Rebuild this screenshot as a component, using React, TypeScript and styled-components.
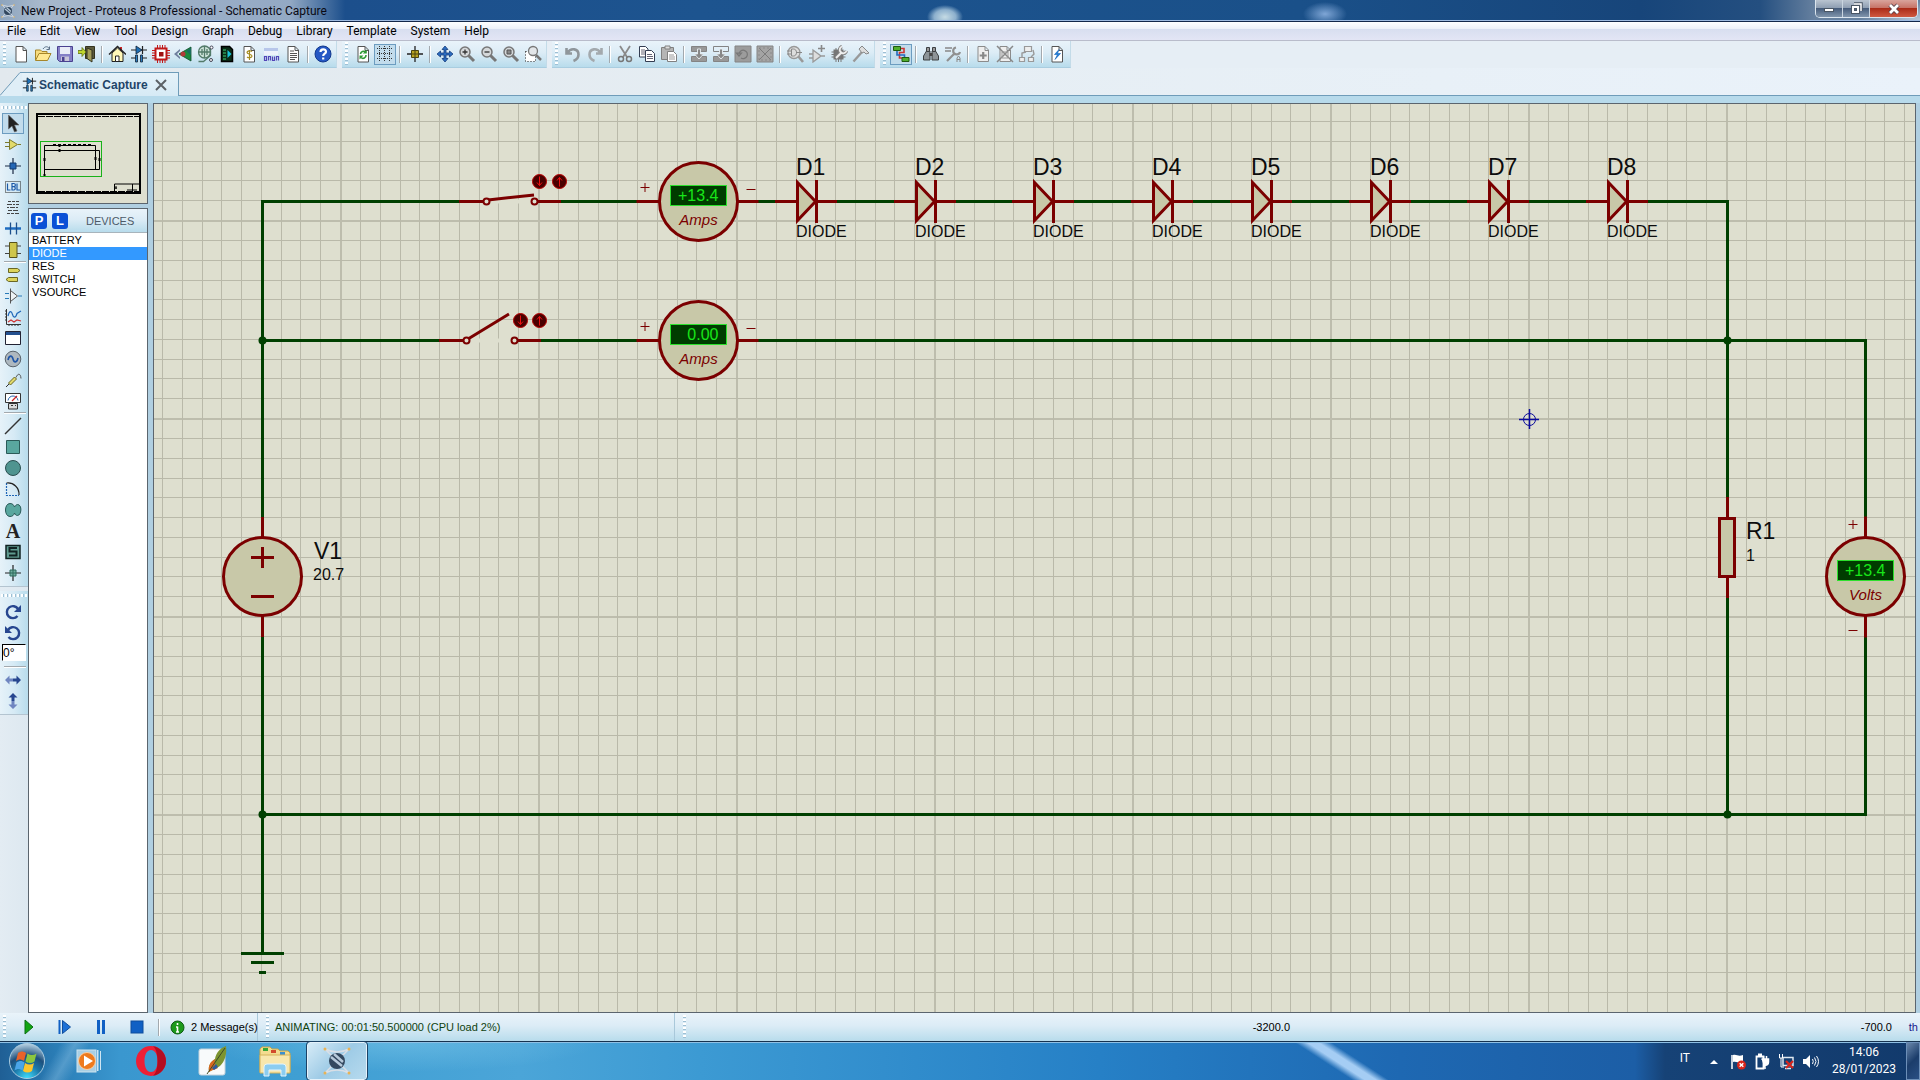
import React from "react";
import styled, { createGlobalStyle, css } from "styled-components";

const Global = createGlobalStyle`
  * { box-sizing: border-box; }
  body { margin: 0; background: #e6eef5; }
  button { font: inherit; color: inherit; border: 0; background: none; padding: 0; margin: 0; cursor: default; }
  ul { list-style: none; margin: 0; padding: 0; }
`;

const uiFont = `Roboto, "Open Sans", sans-serif`;
const sansFont = `"Liberation Sans", Arial, sans-serif`;
const barGradient = "linear-gradient(#e9f3fa, #dcecf6 45%, #b8dcec)";

/* ---------- window frame ---------- */

const Window = styled.div`
  display: flex;
  flex-direction: column;
  height: 100vh;
  min-height: 640px;
  overflow: hidden;
  font: 11px/14px ${sansFont};
  color: #000;
  background: #e6eef5;
`;

const TitleBar = styled.header`
  display: flex;
  align-items: flex-start;
  justify-content: space-between;
  height: 22px;
  flex: none;
  border-bottom: 1px solid #14284a;
  box-shadow: inset 0 -1px #9fbbe0;
  background:
    radial-gradient(ellipse 18px 12px at 945px 17px, #c5dbe4, #8db0cd 60%, transparent),
    radial-gradient(ellipse 22px 12px at 1325px 14px, #7fa6d6, transparent),
    radial-gradient(ellipse 60px 20px at 100% 100%, #b9cbdc, transparent),
    linear-gradient(90deg, #8ea5be, #a7b8cc 40px, #93a9c4 290px, #1c4f8c 345px, #1d548f 700px, #1a5089 1300px, #17457a 1640px, #244f80 1760px, #66809f 1815px, #64819f);
`;

const TitleText = styled.h1`
  display: flex;
  align-items: center;
  gap: 5px;
  height: 22px;
  margin: 0;
  padding-left: 0;
  font: 12px/20px ${uiFont};
  color: #0a0a14;
`;

const WindowButtons = styled.div`
  display: flex;
  height: 18px;
  margin-right: 2px;
  border: 1px solid #dbe5ee;
  border-top: 0;
  border-radius: 0 0 5px 5px;
  overflow: hidden;
`;

const WindowButton = styled.button<{ $wide?: boolean }>`
  display: flex;
  align-items: center;
  justify-content: center;
  width: ${(p) => (p.$wide ? 47 : 27)}px;
  border-right: 1px solid #c9d5e0;
  background: ${(p) =>
    p.$wide
      ? "linear-gradient(#d9a49c, #c77468 45%, #ab2c18 50%, #cf5940)"
      : "linear-gradient(#b9c4d0, #8f9fb3 45%, #475d7c 50%, #8095ac)"};
  &:last-child { border-right: 0; }
`;

const MenuBar = styled.nav`
  display: flex;
  height: 19px;
  flex: none;
  border-bottom: 1px solid #b9bccb;
  background: linear-gradient(#fff, #eff2f9 36%, #d8dff0 40%, #e3e5f5);
`;

const MenuButton = styled.button`
  padding: 0 7px;
  font: 12px/19px ${uiFont};
`;

/* ---------- toolbars ---------- */

const ToolbarRow = styled.div`
  display: flex;
  gap: 5px;
  height: 27px;
  flex: none;
`;

const Toolbar = styled.div`
  display: flex;
  align-items: center;
  padding-right: 2px;
  border-bottom: 1px solid #a9cde0;
  border-right: 1px solid #c3dbe8;
  background: ${barGradient};
`;

const Grip = styled.span<{ $flat?: boolean }>`
  flex: none;
  ${(p) =>
    p.$flat
      ? css`
          width: 26px;
          height: 3px;
          margin: 3px 1px 4px;
          background: repeating-linear-gradient(90deg, #fff 0 2px, #9dbfd4 2px 3px, transparent 3px 4px);
        `
      : css`
          width: 3px;
          height: 24px;
          margin: 0 4px 0 3px;
          background: repeating-linear-gradient(#fff 0 2px, #9dbfd4 2px 3px, transparent 3px 4px);
        `}
`;

const Divider = styled.span<{ $flat?: boolean }>`
  flex: none;
  ${(p) =>
    p.$flat
      ? css`width: 22px; height: 2px; margin: 1px 2px 1px 4px; border-top: 1px solid #a3a9ae; border-bottom: 1px solid #fff;`
      : css`width: 2px; height: 17px; margin: 0 3px; border-left: 1px solid #a3a9ae; border-right: 1px solid #fff;`}
`;

const ToolButton = styled.button<{ $on?: boolean }>`
  display: flex;
  align-items: center;
  justify-content: center;
  flex: none;
  width: 22px;
  height: 21px;
  ${(p) => p.$on && css`background: #c2dcec; box-shadow: inset 0 0 0 1px #6c9cc0;`}
`;

/* ---------- tab strip ---------- */

const TabStrip = styled.div`
  display: flex;
  align-items: flex-end;
  height: 35px;
  flex: none;
  padding-top: 4px;
  border-bottom: 7px solid #b7daeb;
  background: linear-gradient(90deg, #e2e9ee, #e6eef4 50%, #eaf2fa);
`;

const TabSlope = styled.svg`
  flex: none;
  width: 22px;
  height: 24px;
`;

const Tab = styled.button`
  display: flex;
  align-items: center;
  height: 24px;
  padding: 0 10px 0 0;
  border: 1px solid #6f9cb9;
  border-width: 1px 1px 0 0;
  background: linear-gradient(#e6f2f9, #d6eaf5);
  font: bold 12px/22px ${sansFont};
  color: #1f4468;
  & > svg:first-child { margin-right: 2px; }
  & > svg:last-child { margin-left: 6px; }
`;

const TabRule = styled.span`
  flex: 1;
  height: 1px;
  background: #6f9cb9;
`;

/* ---------- workspace ---------- */

const Workspace = styled.main`
  display: flex;
  flex: 1;
  min-height: 0;
  padding-right: 4px;
  background: #b0cfe1;
`;

const ToolRail = styled.div`
  display: flex;
  flex-direction: column;
  gap: 4px;
  width: 28px;
  flex: none;
  background: linear-gradient(90deg, #e3ecf3, #dde8f0);
`;

const RailGroup = styled.div`
  display: flex;
  flex-direction: column;
  padding-bottom: 3px;
  border-bottom: 1px solid #b4c4d0;
  background: linear-gradient(90deg, #e6f2f9, #d6eaf5 50%, #b8dcec);
  & > ${ToolButton} { margin-left: 2px; }
`;

const AngleInput = styled.input`
  width: 24px;
  height: 17px;
  margin: 1px 0 4px 2px;
  padding: 0;
  border: 1px solid #fff;
  border-top-color: #000;
  border-left-color: #000;
  border-radius: 0;
  background: #fff;
  font: 12px/14px ${sansFont};
`;

const SidePanels = styled.aside`
  display: flex;
  flex-direction: column;
  gap: 4px;
  width: 120px;
  flex: none;
  margin-right: 5px;
`;

const Overview = styled.section`
  height: 101px;
  flex: none;
  border: 1px solid #5b656e;
  background: #dedfcf;
`;

const DevicePanel = styled.section`
  display: flex;
  flex-direction: column;
  flex: 1;
  border: 1px solid #5b656e;
  background: #fff;
`;

const DeviceHeader = styled.div`
  display: flex;
  align-items: center;
  gap: 5px;
  height: 24px;
  margin-bottom: 1px;
  padding-left: 2px;
  border-bottom: 1px solid #a8b4bc;
  background: ${barGradient};
`;

const LetterButton = styled.button`
  width: 16px;
  height: 16px;
  border-radius: 3px;
  background: #0b50d6;
  color: #fff;
  font: bold 13px/16px ${sansFont};
`;

const DeviceTitle = styled.h2`
  flex: 1;
  margin: 0;
  padding-left: 13px;
  font: 11px/16px ${sansFont};
  color: #4d5a68;
`;

const DeviceItem = styled.button<{ $on?: boolean }>`
  display: block;
  width: 100%;
  height: 13px;
  padding: 0 3px;
  text-align: left;
  font: 11px/13px ${sansFont};
  background: ${(p) => (p.$on ? "#3399ff" : "#fff")};
  color: ${(p) => (p.$on ? "#fff" : "#000")};
`;

const Sheet = styled.section`
  flex: 1;
  min-width: 0;
  border: 1px solid #5b656e;
  background: #dedfcf;
  overflow: hidden;
`;

const Drawing = styled.svg`
  display: block;
  width: 100%;
  height: 100%;
  font-family: ${sansFont};
`;

/* ---------- status bar ---------- */

const StatusBar = styled.footer`
  display: flex;
  align-items: stretch;
  gap: 5px;
  height: 28px;
  flex: none;
  background: ${barGradient};
`;

const StatusPane = styled.div<{ $grow?: number; $w?: number }>`
  display: flex;
  align-items: center;
  white-space: nowrap;
  ${(p) => (p.$grow ? `flex: ${p.$grow} 1 0;` : "flex: none;")}
  ${(p) => p.$w && `width: ${p.$w}px;`}
  border-right: 1px solid #a9c8da;
  &:last-child { border-right: 0; }
`;

const SimControls = styled.div`
  display: flex;
  margin-left: 1px;
`;

const SimButton = styled.button`
  display: flex;
  align-items: center;
  justify-content: center;
  width: 36px;
  height: 22px;
`;

const MessageButton = styled.button`
  display: flex;
  align-items: center;
  gap: 6px;
  padding: 0 0 0 7px;
`;

const SimText = styled.output`
  padding-left: 2px;
  color: #10420f;
`;

const Coords = styled.div`
  display: flex;
  flex: 1;
  justify-content: flex-end;
  padding-right: 2px;
`;

const Coord = styled.output<{ $w: number; $unit?: boolean }>`
  width: ${(p) => p.$w}px;
  text-align: right;
  color: ${(p) => (p.$unit ? "#16168c" : "#000")};
`;

/* ---------- taskbar ---------- */

const Taskbar = styled.footer`
  display: flex;
  align-items: stretch;
  height: 39px;
  flex: none;
  border-top: 1px solid #16324f;
  box-shadow: inset 0 1px #8fc0e4;
  color: #fff;
  font: 12px/17px ${uiFont};
  background:
    linear-gradient(33deg, transparent calc(50% - 10px), #a5cdf4 calc(50% - 3px), #a5cdf4 calc(50% + 3px), transparent calc(50% + 10px)) 1270px 0 / 146px 40px no-repeat,
    linear-gradient(120deg, transparent 40%, rgba(160, 205, 235, 0.35) 50%, transparent 60%) 0 0 / 130px 40px no-repeat,
    radial-gradient(ellipse 200px 30px at 400px 0, rgba(140, 210, 240, 0.4), transparent),
    linear-gradient(90deg, #1f5f95, #2b7fb8 60px, #3a97cf 120px, #3f9fd3 300px, #4ba5d8 520px, #3c9ad3 700px, #2680c6 1100px, #1e68b2 1400px, #1c5ea6 1635px, #164276 1665px, #123a6c);
`;

const TaskButton = styled.button<{ $on?: boolean }>`
  display: flex;
  align-items: center;
  justify-content: center;
  width: 60px;
  height: 38px;
  margin-right: 2px;
  ${(p) =>
    p.$on &&
    css`
      border: 1px solid #e4f2fb;
      border-radius: 3px;
      outline: 1px solid #1b4266;
      outline-offset: 0;
      background: linear-gradient(135deg, #d6ebf7, #9ecbe6 50%, #b6daee);
    `}
`;

const StartButton = styled(TaskButton)`
  width: 54px;
  margin-right: 5px;
`;

const Tray = styled.div`
  display: flex;
  align-items: center;
  margin-left: auto;
`;

const TrayButton = styled.button`
  display: flex;
  align-items: center;
  justify-content: center;
  width: 24px;
  height: 30px;
`;

const Language = styled.button`
  margin-right: 12px;
  padding-bottom: 6px;
`;

const Clock = styled.button`
  width: 84px;
  text-align: center;
`;

const ShowDesktop = styled.button`
  width: 14px;
  height: 38px;
  border: 1px solid #6c8fb8;
  background: linear-gradient(135deg, #6a87ab, #1b3d6b 50%, #2a5084);
`;

/* ---------- icons ---------- */

const Ico = ({ children, s = 18 }: { children: React.ReactNode; s?: number }) => (
  <svg width={s} height={s} viewBox="0 0 18 18" fill="none" aria-hidden="true">
    {children}
  </svg>
);

const page = <path d="M4 1.5h7l3.500 3.500v12h-10.500z M11 1.500v4h3.500" fill="#fff" stroke="#555" />;
const grayPage = <path d="M4 1.500h7l3.500 3.500v11.500h-10.500z M11 1.500v4h3.500" fill="#eee" stroke="#8b8b8b" />;
const lens = (inside: React.ReactNode) => (
  <>
    <path d="M10.500 10.500l5.500 5.500" stroke="#777" strokeWidth="3" />
    <circle cx="7" cy="7" r="5" fill="#d5d8da" stroke="#777" strokeWidth="1.500" />
    {inside}
  </>
);
const schem = (
  <>
    <path d="M1 5h16 M12.500 1v8 M1 13h6 M11 13h6" stroke="#222" strokeWidth="1.200" />
    <path d="M6 1l6 4-6 4z" fill="#1d6fb4" stroke="#123" strokeWidth=".8" />
    <path d="M5.500 10h2v7h-2z M10.500 10h2v7h-2z" fill="#2a7fc2" stroke="#123" strokeWidth=".8" />
  </>
);

const icons: Record<string, React.ReactNode> = {
  "New Project": page,
  "Open Project": (
    <>
      <path d="M1.500 15V5h5l1.500 1.500h5V9" fill="#f6dc7e" stroke="#a6862a" />
      <path d="M1.500 15.500L5 8.500h12l-3.500 7z" fill="#ffe991" stroke="#a6862a" />
      <path d="M9 4c2-3 5-3 6.500 0m0-2.500V4.500H12.500" stroke="#5a6f86" />
    </>
  ),
  "Save Project": (
    <>
      <path d="M1.500 1.500h15v15h-13l-2-2z" fill="#8580c6" stroke="#4a4190" />
      <path d="M4 2h10v7H4z" fill="#e9ecf6" />
      <path d="M5 11.500h8V16H5z" fill="#c9c6d8" /><path d="M6 12h2.500v4H6z" fill="#4a4190" />
    </>
  ),
  "Close Project": (
    <>
      <path d="M7.500 1.500h9v12h-9z" fill="#5b5a3c" stroke="#33331f" />
      <path d="M9 3l5 2v12l-5-3.500z" fill="#a39e5a" stroke="#33331f" />
      <path d="M0 5.500h4v-3l4 4.500-4 4.500v-3H0z" fill="#bfd62f" stroke="#5c7011" strokeWidth=".8" />
    </>
  ),
  "Home Page": (
    <>
      <path d="M12 2h2v4h-2z" fill="#c22" />
      <path d="M4 8v8.500h11V8L9.500 3z" fill="#fff7b8" stroke="#222" />
      <path d="M1 9.500L9.500 1.500 18 9.500" stroke="#222" strokeWidth="1.400" />
      <path d="M7.500 11h3.500v5.500H7.500z" fill="#fff" stroke="#222" />
    </>
  ),
  "Schematic Capture": schem,
  "PCB Layout": (
    <>
      <path d="M5.500 0v18 M8 0v18 M10.500 0v18 M13 0v18 M0 5.500h18 M0 8h18 M0 10.500h18 M0 13h18" stroke="#c01818" />
      <path d="M3.500 3.500h11v11h-11z" fill="#fff" stroke="#c01818" strokeWidth="2" />
      <path d="M7 7h4.500v4.500H7z" fill="#a01010" />
    </>
  ),
  "3D Visualizer": (
    <>
      <path d="M0 9l6-5v2L3 9l3 3v2z" fill="#6f7f9d" />
      <path d="M5 9l12-7v14z" fill="#1b8b3e" stroke="#0d4c2b" strokeWidth=".8" />
      <circle cx="9" cy="9" r="2.500" fill="#b23a3a" /><path d="M12 6l5-3v7z" fill="#1a6d60" />
    </>
  ),
  "Gerber Viewer": (
    <>
      <circle cx="8.500" cy="7" r="6" fill="#cfe4da" stroke="#537b6a" strokeWidth="1.300" />
      <path d="M2 7h13M8.500 1v12M2.500 16.500h5l7-6V3M6 4v6M11 4v6" stroke="#537b6a" strokeWidth="1.300" />
      <circle cx="15.500" cy="2.500" r="1.500" fill="#fff" stroke="#445" /><circle cx="15" cy="15" r="1.500" fill="#fff" stroke="#445" />
    </>
  ),
  "Design Explorer": (
    <>
      <path d="M3.500 1.500h8l3 3v12h-11z" fill="#0a2d17" stroke="#000" strokeWidth="1.500" />
      <path d="M5 5h3 M5 8h3 M5 11h3 M5 14h3" stroke="#3fd07a" />
      <path d="M9.500 5v8l4-4z" fill="#19c3d8" />
    </>
  ),
  "Bill of Materials": (
    <>
      {page}
      <path d="M12 6.500c-1.500-1.200-5-1-5 1s5 1.500 5 3.500-3.500 2.200-5 1M9.500 5v10" stroke="#a58b1e" strokeWidth="1.200" />
    </>
  ),
  "Source Code": (
    <>
      <path d="M2 3h14v3H2z" fill="#b7c6ea" /><path d="M2 6h14v4H2z" fill="#eef2fb" />
      <path d="M2.500 11.500h2v4h-2z M6.500 15.500v-4h2v4 M10.500 11.500v4h2v-4 M14.500 15.500v-4h2v4" stroke="#5346b8" strokeWidth="1.200" />
    </>
  ),
  "Project Notes": (
    <>
      {page}
      <path d="M6 6h4M6 8.500h7M6 10.500h7M6 12.500h7M6 14.500h5" stroke="#555" />
    </>
  ),
  Help: (
    <>
      <circle cx="9" cy="9" r="8" fill="#2557c4" stroke="#12388c" />
      <path d="M6.500 7c0-3.500 5.500-3.500 5.500-.3 0 2-2.800 2-2.800 4.300M9.200 12.500v2" stroke="#fff" strokeWidth="2.200" />
    </>
  ),
  "Redraw Display": (
    <>
      {page}
      <path d="M6.500 9a3 3 0 0 1 5-2M12 10a3 3 0 0 1-5 2.500" stroke="#2f9a35" strokeWidth="1.600" />
      <path d="M12.800 4.500v4h-4z M5.500 14.500v-4h4z" fill="#2f9a35" />
    </>
  ),
  "Toggle Grid": (
    <>
      <path d="M1 3.500h16M1 8.500h16M1 13.500h16" stroke="#333" strokeDasharray="1 1" />
      <path d="M3.500 1v16M8.500 1v16M13.500 1v16" stroke="#333" strokeDasharray="1 1" />
    </>
  ),
  "False Origin": (
    <>
      <path d="M9 1v16M1 9h16" stroke="#222" strokeWidth="1.300" />
      <path d="M5.500 5.500h7v7h-7z" fill="#b8a321" stroke="#4d4510" /><path d="M9 5v8M5 9h8" stroke="#4d4510" />
    </>
  ),
  "Center at Cursor": (
    <path d="M9 1l3 3.500h-2v3.500h3.500V6L17 9l-3.500 3v-2H10v3.500h2L9 17l-3-3.500h2V10H4.500v2L1 9l3.500-3v2H8V4.500H6z" fill="#2b6cc0" stroke="#173e7c" strokeWidth=".8" />
  ),
  "Zoom In": lens(<path d="M4.500 7h5M7 4.500v5" stroke="#333" strokeWidth="1.300" />),
  "Zoom Out": lens(<path d="M4.500 7h5" stroke="#333" strokeWidth="1.300" />),
  "Zoom All": lens(<path d="M5 5h4v4H5z" fill="#888" stroke="#555" />),
  "Zoom Area": (
    <>
      <path d="M1.500 6.500h10v10h-10z" stroke="#222" strokeDasharray="1 2" fill="#fff" />
      <path d="M12 10l5 5" stroke="#777" strokeWidth="2.500" /><circle cx="9" cy="6" r="4.500" fill="#e2e6e9" stroke="#777" strokeWidth="1.300" />
    </>
  ),
  Undo: <path d="M2.500 3v5.500H8M3.500 7.500c3.500-5 11-4 11 2 0 3.500-2.500 5.500-5 6.500" stroke="#8f969b" strokeWidth="2.600" />,
  Redo: <path d="M15.500 3v5.500H10M14.500 7.500c-3.500-5-11-4-11 2 0 3.500 2.500 5.500 5 6.500" stroke="#a3a9ad" strokeWidth="2.600" />,
  Cut: (
    <>
      <path d="M4 1l7 11M14 1L7 12" stroke="#8a8a8a" strokeWidth="1.800" />
      <circle cx="5" cy="14" r="2.500" stroke="#777" strokeWidth="1.500" /><circle cx="13" cy="14" r="2.500" stroke="#777" strokeWidth="1.500" />
    </>
  ),
  Copy: (
    <>
      <path d="M1.500 1.500h6l2.500 2.500v8h-8.500z" fill="#fff" stroke="#333d52" /><path d="M3 5h4M3 7h4M3 9h4" stroke="#667" />
      <path d="M7.500 5.500h6l3 3v8h-9z" fill="#fff" stroke="#333d52" /><path d="M9 9.500h5M9 11.500h6M9 13.500h6" stroke="#667" />
    </>
  ),
  Paste: (
    <>
      <path d="M1.500 2.500h12v12h-12z" fill="#b5b5b5" stroke="#808080" /><path d="M5 1h5v3H5z" fill="#ddd" stroke="#808080" />
      <path d="M7.500 6.500h6l3 3v7h-9z" fill="#fff" stroke="#808080" /><path d="M9 10h5M9 12h6M9 14h6" stroke="#999" />
    </>
  ),
  "Block Copy": (
    <>
      <path d="M1.500 1.500h15v5h-15z M1.500 11.500h15v5h-15z" fill="#989898" stroke="#848484" />
      <path d="M7.500 4h3v5h3L9 14 4.500 9h3z" fill="#888" stroke="#e8eef2" strokeWidth=".9" />
    </>
  ),
  "Block Move": (
    <>
      <path d="M1.500 1.500h15v5h-15z" stroke="#848484" /><path d="M1.500 11.500h15v5h-15z" fill="#989898" stroke="#848484" />
      <path d="M7.500 4h3v5h3L9 14 4.500 9h3z" fill="#888" stroke="#e8eef2" strokeWidth=".9" />
    </>
  ),
  "Block Rotate": (
    <>
      <path d="M1 1h16v16H1z" fill="#9c9c9c" stroke="#848484" />
      <path d="M5 9a4.200 4.200 0 1 1 2 4M2.500 8h5L5 11z" stroke="#777" strokeWidth="1.200" />
    </>
  ),
  "Block Delete": (
    <>
      <path d="M1 1h16v16H1z" fill="#a4a4a4" stroke="#848484" /><path d="M3 3l12 12M15 3L3 15" stroke="#7a7a7a" />
      <path d="M3 3h12v12H3z" stroke="#8a8a8a" strokeDasharray="2 2" />
    </>
  ),
  "Pick Parts": (
    <>
      <path d="M12 11l5 6" stroke="#999" strokeWidth="2.600" /><circle cx="8" cy="7.500" r="6" fill="#ddd" stroke="#999" strokeWidth="1.300" />
      <path d="M5.500 4v7h2c4 0 4-7 0-7zM1 6h4M1 9h4M10 7.500h6" stroke="#888" />
    </>
  ),
  "Make Device": (
    <>
      <path d="M5 5v12l8-6zM1 9h4M1 13h4M13 11h4" stroke="#999" strokeWidth="1.300" fill="#ddd" />
      <path d="M13.500 0v7M10 3.500h7" stroke="#888" strokeWidth="1.600" />
    </>
  ),
  "Packaging Tool": (
    <>
      <path d="M3.500 4.500h10v10h-10z" fill="#777" /><path d="M1.500 7h14M1.500 9.500h14M1.500 12h14M6 3v14M8.500 3v14M11 3v14" stroke="#777" />
      <path d="M6 13l6-6M12 1.500a3.500 3.500 0 1 0 4.500 4.500" stroke="#888" strokeWidth="3.600" />
      <path d="M6 13l6-6M12 1.500a3.500 3.500 0 1 0 4.500 4.500" stroke="#eee" strokeWidth="1.800" />
    </>
  ),
  Decompose: (
    <>
      <path d="M1.500 16.500L10 7" stroke="#999" strokeWidth="2.400" /><path d="M7 4l3-3 7 7-3 1-2-2-2 1z" fill="#ddd" stroke="#888" />
    </>
  ),
  "Wire Autorouter": (
    <>
      <path d="M8 3.500h4v4H7.500V13H11" stroke="#c33" strokeWidth="1.600" /><path d="M5 5v5h7.500V13" stroke="#246bbf" strokeWidth="1.600" />
      <path d="M1.500 1.500h7v4h-7z M10 12.500h7v4h-7z" fill="#4fae2c" stroke="#1f5a10" />
    </>
  ),
  "Search and Tag": (
    <>
      <path d="M4.500 6h3.500v9H1.500v-4z M13.500 6h-3.500v9h6.500v-4z" fill="#8d9498" stroke="#3c4043" /><path d="M4.500 2.500h3v4h-3z M10.500 2.500h3v4h-3z" fill="#999" stroke="#3c4043" />
      <path d="M7.500 8h3v3h-3z" fill="#444" />
    </>
  ),
  "Property Assignment": (
    <>
      <path d="M1 3h7M1 6h6" stroke="#888" strokeWidth="1.500" />
      <path d="M3 16l8-8M12 2.500a3.500 3.500 0 1 0 4 4.500" stroke="#909090" strokeWidth="2.200" />
      <path d="M13 17v-4l1.500-2 1.500 2v4M13 14.500h3" stroke="#888" />
    </>
  ),
  "New Sheet": (<>{grayPage}<path d="M9.200 7v7M5.700 10.500h7" stroke="#888" strokeWidth="2.200" /></>),
  "Remove Sheet": (
    <>
      {grayPage}
      <path d="M1 1l16 16M17 1L1 17" stroke="#888" strokeWidth="1.500" /><path d="M6 7h6v6H6z" stroke="#999" />
    </>
  ),
  "Exit to Parent": (
    <>
      <path d="M6.500 1.500h7v5h-7z M1.500 12.500h5v4h-5z M10.500 12.500h5v4h-5z" fill="#eee" stroke="#999" strokeWidth="1.200" />
      <path d="M4 12V8l4-1M13 12l3-3-1-4" stroke="#999" strokeWidth="1.400" />
    </>
  ),
  "Electrical Check": (<>{page}<path d="M11 4.500L6.500 9.500h3L7 14.500l5.500-6H9.500z" fill="#1e7fe0" stroke="#1462b4" strokeWidth=".6" /></>),

  Selection: <path d="M4.500 0v14l3.500-3 2.500 6 2.500-1-2.500-6h4.500z" fill="#222" stroke="#666" strokeWidth=".6" />,
  Component: <path d="M5.500 3.500v10l8-5zM1 6.500h4M1 10.500h4M14 8.500h3" fill="#e2da6b" stroke="#7d7a2c" />,
  "Junction Dot": (<><path d="M9 1v16M1 9h16" stroke="#1b2a44" strokeWidth="1.200" /><path d="M6 6h6v6H6z" fill="#2467b5" stroke="#143c70" /></>),
  "Wire Label": (
    <>
      <rect x="1.500" y="3.500" width="15" height="11" stroke="#222" strokeDasharray="1 1" />
      <path d="M3.500 5.500v6.500h3M8 5.500v6.500h2a1.700 1.700 0 0 0 0-3.300H8h1.800a1.600 1.600 0 0 0 0-3.200zM13 5.500v6.500h3" stroke="#1c5aa8" strokeWidth="1.200" />
    </>
  ),
  "Text Script": (
    <path d="M4 2.500h3M8 2.500h3M12 2.500h3M3 5.500h5M9 5.500h2M12 5.500h3M3 8.500h2M6 8.500h5M12 8.500h2M4 11.500h4M9 11.500h5M3 14.500h3M7 14.500h3M11 14.500h4" stroke="#444" />
  ),
  Bus: (<><path d="M1 8.500h16" stroke="#1f6cc0" strokeWidth="2.500" /><path d="M6.500 2.500v12M12.500 2.500v12" stroke="#1c4f8c" strokeWidth="1.300" /></>),
  Subcircuit: (<><path d="M1 5h16M1 12.500h16" stroke="#444" /><path d="M5.500 1.500h7.500v15H5.500z" fill="#cfc64c" stroke="#57521b" /></>),
  Terminals: <path d="M4.500 2.500h9l2.500 2-2.500 2h-9z M13.500 11.500h-9l-2.500 2 2.500 2h9z" fill="#dcd45b" stroke="#6a6725" />,
  "Device Pins": (<><path d="M6.500 3.500v11l7-5.500z" fill="#eef3f6" stroke="#555" /><path d="M6.500 1.500v15" stroke="#555" /><path d="M1 6.500h4M1 11.500h4M14 9h4" stroke="#287ab8" /></>),
  Graph: (
    <>
      <path d="M2.500 1v15.500H17M1 3h1.500M1 6h1.500M1 9h1.500M1 12h1.500M5 18v-1M8 18v-1M11 18v-1M14 18v-1" stroke="#333" />
      <path d="M4 8c1.500-6 3.500-5 4.500-1.500s3 4 4.500-1l4-2.500" stroke="#1f66b8" strokeWidth="1.200" /><path d="M4 14l3-2 3 2 3-2 4 1" stroke="#c33" strokeWidth="1.200" />
    </>
  ),
  "Active Popup": (<><path d="M1.500 2.500h15v13h-15z" fill="#fff" stroke="#223" /><path d="M2 3h14v3H2z" fill="#23508f" /></>),
  Generator: (<><circle cx="9" cy="9" r="7.800" fill="#aeb8bf" stroke="#5a646c" /><path d="M4 10c1-5 4-5 5-1s4 4 5-1" stroke="#1f56a8" strokeWidth="1.600" /></>),
  Probe: (<><path d="M2 16l3-3" stroke="#333" /><path d="M4.500 12l6-6 2 2-6 6z" fill="#e2da6b" stroke="#6a6725" /><path d="M12 6.500c1.500-4 4.500-5 5 1" stroke="#555" /></>),
  Instruments: (
    <>
      <path d="M1.500 1.500h15v9h-15z" fill="#fff" stroke="#333" /><path d="M4 8.500c1-6 9-6 10 0" stroke="#2264b0" /><path d="M8 9l5-5" stroke="#c22" strokeWidth="1.300" />
      <path d="M4.500 11.500h9v5.500h-9z" fill="#d8dadb" stroke="#333" /><path d="M7 13.500h2M11 13.500h1" stroke="#333" />
    </>
  ),
  Line: <path d="M1 17L17 1" stroke="#333" strokeWidth="1.400" />,
  Box: <path d="M2.500 2.500h13v13h-13z" fill="#59a79f" stroke="#2b5a58" />,
  Circle: <circle cx="9" cy="9" r="7.500" fill="#4f9490" stroke="#2b4f50" />,
  Arc: (<><path d="M2.500 3v12.500H15" stroke="#1f66b8" strokeDasharray="2 1" strokeWidth="1.200" /><path d="M2.500 3c7-1 13 5 12.500 12" stroke="#222" strokeWidth="1.200" /></>),
  Path: <path d="M6 2.500c3 0 4 2 4.500 3.500 1-1.500 2-2.500 3-2.500 5 0 4 11 0 11-1.500 0-2.500-1-3-2.500-.5 2-2 3.500-4.500 3.500-6 0-6-13 0-13z" fill="#59a79f" stroke="#2b5a58" />,
  Symbol: (<><path d="M2 2.500h14v13H2z" fill="#5f9a8f" stroke="#122" strokeWidth="1.500" /><path d="M13 5H5.500v3.500h7v4H5" stroke="#122" strokeWidth="2" /></>),
  Marker: (<><path d="M9 1v16M1 9h16" stroke="#222" strokeWidth="1.200" /><path d="M6 6h6v6H6z" stroke="#2e6a5c" fill="#6fae9f" /><path d="M9 6v6M6 9h6" stroke="#2e6a5c" /></>),
  "Rotate Clockwise": (<><path d="M13.500 13a6 6 0 1 1 .5-7" stroke="#27468f" strokeWidth="2.400" /><path d="M17 2v7h-7z" fill="#27468f" /></>),
  "Rotate Anticlockwise": (<><path d="M4.500 13a6 6 0 1 0-.5-7" stroke="#27468f" strokeWidth="2.400" /><path d="M1 2v7h7z" fill="#27468f" /></>),
  "Flip Horizontal": (<><path d="M9 7.500H5.500V4.500L1 9l4.500 4.500v-3H9z" fill="#6f85c0" /><path d="M9 7.500h3.500V4.500L17 9l-4.500 4.500v-3H9z" fill="#27468f" /></>),
  "Flip Vertical": (<><path d="M7.500 9V5.500H4.500L9 1l4.500 4.500h-3V9z" fill="#27468f" /><path d="M7.500 9v3.500H4.500L9 17l4.500-4.500h-3V9z" fill="#6f85c0" /></>),
};

const TextGlyph = styled.span`
  font: bold 20px/18px "Liberation Serif", "Times New Roman", serif;
  color: #222;
`;

const Tool = ({ name, on }: { name: string; on?: boolean }) => (
  <ToolButton aria-label={name} title={name} $on={on}>
    {name === "Text" ? <TextGlyph>A</TextGlyph> : <Ico>{icons[name]}</Ico>}
  </ToolButton>
);

const Tools = ({ names, active, flat }: { names: string[]; active?: string; flat?: boolean }) => (
  <>
    {names.map((n, i) => (n === "|" ? <Divider key={i} $flat={flat} /> : <Tool key={i} name={n} on={n === active} />))}
  </>
);

const menus = ["File", "Edit", "View", "Tool", "Design", "Graph", "Debug", "Library", "Template", "System", "Help"];

const toolbars: { names: string[]; active?: string }[] = [
  { names: ["New Project", "Open Project", "Save Project", "Close Project", "|", "Home Page", "Schematic Capture", "PCB Layout", "3D Visualizer", "Gerber Viewer", "Design Explorer", "Bill of Materials", "Source Code", "Project Notes", "|", "Help"] },
  { names: ["Redraw Display", "Toggle Grid", "|", "False Origin", "|", "Center at Cursor", "Zoom In", "Zoom Out", "Zoom All", "Zoom Area"], active: "Toggle Grid" },
  { names: ["Undo", "Redo", "|", "Cut", "Copy", "Paste", "|", "Block Copy", "Block Move", "Block Rotate", "Block Delete", "|", "Pick Parts", "Make Device", "Packaging Tool", "Decompose"] },
  { names: ["Wire Autorouter", "|", "Search and Tag", "Property Assignment", "|", "New Sheet", "Remove Sheet", "Exit to Parent", "|", "Electrical Check"], active: "Wire Autorouter" },
];

const railTools = ["Selection", "Component", "Junction Dot", "Wire Label", "Text Script", "Bus", "Subcircuit", "|", "Terminals", "Device Pins", "Graph", "Active Popup", "Generator", "Probe", "Instruments", "|", "Line", "Box", "Circle", "Arc", "Path", "Text", "Symbol", "Marker"];

const devices = ["BATTERY", "DIODE", "RES", "SWITCH", "VSOURCE"];

/* ---------- schematic ---------- */

const RED = "#7b0000";
const GREEN = "#004000";
const BODY = "#c8c8a8";

const minor = [20, 40, 60, 79, 99, 119, 139, 158, 178];

const Diode = ({ x, label }: { x: number; label: string }) => (
  <g>
    <path d={`M${x - 21} 201.500H${x}M${x + 20} 201.500h21M${x + 20.500} 180v43`} stroke={RED} strokeWidth="3" />
    <path d={`M${x + 1.500} 182.500v38l18-19z`} fill={BODY} stroke={RED} strokeWidth="3" />
    <text x={x} y="175" fontSize="23">{label}</text>
    <text x={x} y="237" fontSize="16">DIODE</text>
  </g>
);

const Meter = ({ x, y, value, unit, vertical }: { x: number; y: number; value: string; unit: string; vertical?: boolean }) => (
  <g>
    <path d={vertical ? `M${x} ${y - 60}v121` : `M${x - 62} ${y}h122`} stroke={RED} strokeWidth="3" />
    <circle cx={x} cy={y} r="39" fill={BODY} stroke={RED} strokeWidth="3" />
    <rect x={x - 28} y={y - 16} width="56" height="20" fill="#003c00" stroke="#2de02d" />
    <text x={x + 20} y={y - 1} fontSize="16" textAnchor="end" fill="#19e619">{value}</text>
    <text x={x} y={y + 23} fontSize="15" textAnchor="middle" fontStyle="italic" fill={RED}>{unit}</text>
    <path
      d={vertical ? `M${x - 17} ${y - 52}h9m-4.500-4.500v9M${x - 17} ${y + 54}h9` : `M${x - 58} ${y - 14}h9m-4.500-4.500v9M${x + 48} ${y - 12}h9`}
      stroke={RED}
    />
  </g>
);

const Actuator = ({ x, y, up }: { x: number; y: number; up?: boolean }) => (
  <g>
    <circle cx={x} cy={y} r="7" fill="#4a0000" stroke="#b80000" />
    <path d={up ? `M${x} ${y + 5}v-9m-2.500 3l2.500-3 2.500 3` : `M${x} ${y - 5}v9m-2.500-3l2.500 3 2.500-3`} stroke="#f01010" fill="none" />
  </g>
);

const Schematic = () => (
  <Drawing role="img" aria-label="Schematic sheet">
    <defs>
      <pattern id="grid" x="-12" y="-82" width="198" height="198" patternUnits="userSpaceOnUse">
        <path d="M0 1h198M1 0v198" stroke="#bdbdad" strokeWidth="2" />
        {minor.map((m) => (
          <path key={m} d={`M${m + 0.5} 0v198M0 ${m + 0.5}h198`} stroke="#b9b9a9" />
        ))}
      </pattern>
    </defs>
    <rect width="100%" height="100%" fill="url(#grid)" />
    <g transform="translate(-154 -104)" fill="none">
      <path
        d="M262.500 953V201.500H1727.500V814.500M262.500 340.500H1865.500V814.500M262.500 814.500H1867"
        stroke={GREEN}
        strokeWidth="3"
      />
      <path d="M241 953.500h43M251 962.500h23M259 972.500h7" stroke={GREEN} strokeWidth="3" />
      <g fill={GREEN}>
        <circle cx="262.500" cy="340.500" r="4" />
        <circle cx="262.500" cy="814.500" r="4" />
        <circle cx="1727.500" cy="340.500" r="4" />
        <circle cx="1727.500" cy="814.500" r="4" />
      </g>

      {/* closed and open switches: clear the wire, then draw contacts */}
      <path d="M488 201.500h45M468 340.500h45" stroke="#dedfcf" strokeWidth="4" />
      <path d="M459 201.500h25M537 201.500h24M439 340.500h25M517 340.500h24M488 200l46-5M468 339l41-25" stroke={RED} strokeWidth="3" />
      <g stroke={RED} strokeWidth="2" fill="#dedfcf">
        <circle cx="486.500" cy="201.500" r="3" />
        <circle cx="534.500" cy="201.500" r="3" />
        <circle cx="466.500" cy="340.500" r="3" />
        <circle cx="514.500" cy="340.500" r="3" />
      </g>
      <Actuator x={539.5} y={181.5} />
      <Actuator x={559.5} y={181.5} up />
      <Actuator x={520.5} y={320.5} />
      <Actuator x={539.5} y={320.5} up />

      <g fill="#0c0c0c">
        {[796, 915, 1033, 1152, 1251, 1370, 1488, 1607].map((x, i) => (
          <Diode key={x} x={x} label={`D${i + 1}`} />
        ))}
        <text x="314" y="559" fontSize="23">V1</text>
        <text x="313" y="580" fontSize="16">20.7</text>
        <text x="1746" y="539" fontSize="23">R1</text>
        <text x="1746" y="561" fontSize="16">1</text>
      </g>

      <Meter x={698.5} y={201.5} value="+13.4" unit="Amps" />
      <Meter x={698.5} y={340.5} value="0.00" unit="Amps" />
      <Meter x={1865.5} y={576.5} value="+13.4" unit="Volts" vertical />

      <path d="M262.500 517v120M1727.500 497v101" stroke={RED} strokeWidth="3" />
      <circle cx="262.500" cy="576.500" r="39" fill={BODY} stroke={RED} strokeWidth="3" />
      <path d="M251 557.500h23M262.500 547v21M251 596.500h23" stroke={RED} strokeWidth="3" />
      <rect x="1719.500" y="518.500" width="15" height="58" fill={BODY} stroke={RED} strokeWidth="3" />

      <path d="M1519 419.500h20M1529.500 409v20" stroke="#0a0a9c" strokeWidth="1.500" />
      <circle cx="1529.500" cy="419.500" r="6" stroke="#0a0a9c" />
    </g>
  </Drawing>
);

const OverviewMap = () => (
  <svg width="100%" height="99" viewBox="0 0 118 99" preserveAspectRatio="xMinYMin" fill="none" aria-label="Sheet overview" role="img">
    <rect x="8" y="10" width="103" height="79" stroke="#000" strokeWidth="2" />
    <path d="M9 12.500h102M9 87.500h102" stroke="#000" strokeDasharray="7 1" />
    <path d="M85.500 88v-8h26M103.500 80v8M86 84h2M87 82v3M98 86h10" stroke="#000" />
    <rect x="11.500" y="37.500" width="61" height="35" stroke="#19b219" />
    <path d="M15.500 71V41.500H66.500V65.500H15.500M15.500 46.500H70.500V65.500H66" stroke="#000" />
    <path d="M24 41h40" stroke="#000" strokeWidth="2" strokeDasharray="3 2" />
    <path d="M15.500 54v3M66.500 53v3M70.500 54v3M30.500 40v3M30.500 45v3M15.500 70v2" stroke="#000" strokeWidth="2" />
  </svg>
);

/* ---------- app logos ---------- */

const AppLogo = ({ s }: { s: number }) => (
  <svg width={s} height={s} viewBox="0 0 32 32" fill="none" aria-hidden="true">
    <path d="M4 4l24 24M28 4L4 28M4 4q12 6 24 0M4 28q12-6 24 0" stroke="#d9dfe6" strokeWidth="1.500" />
    <circle cx="16" cy="16" r="8" fill="#33485f" />
    <path d="M10 12l11 9M13 9l9 8" stroke="#b7c9da" strokeWidth="2.500" />
    <g fill="#e8b356"><circle cx="4" cy="4" r="1.500" /><circle cx="28" cy="4" r="1.500" /><circle cx="4" cy="28" r="1.500" /><circle cx="28" cy="28" r="1.500" /></g>
  </svg>
);

const StartLogo = () => (
  <svg width="38" height="38" viewBox="0 0 38 38" aria-hidden="true">
    <defs>
      <radialGradient id="orb" cx=".5" cy="1" r="1">
        <stop offset="0" stopColor="#3fe0ff" /><stop offset=".4" stopColor="#1b76a8" /><stop offset=".65" stopColor="#1d4f7c" /><stop offset="1" stopColor="#b9d3e4" />
      </radialGradient>
    </defs>
    <circle cx="19" cy="19" r="17.500" fill="url(#orb)" stroke="#a9cbe0" />
    <path d="M10 11c3-2 5-2 8 0l-2 8c-3-2-5-2-8 0z" fill="#e8622a" />
    <path d="M19.500 11.500c3 2 6 2 9 0l-2 8c-3 2-6 2-9 0z" fill="#8cc63f" />
    <path d="M8.500 20.500c3-2 5-2 8 0l-2 8c-3-2-5-2-8 0z" fill="#4aa5e8" />
    <path d="M17 21c3 2 6 2 9 0l-2 8c-3 2-6 2-9 0z" fill="#fbc52d" />
  </svg>
);

const MediaLogo = () => (
  <svg width="28" height="28" viewBox="0 0 28 28" aria-hidden="true">
    <path d="M22 3h1.500v21H22zM25 4h1v19h-1z" fill="#cfe5f2" />
    <rect x="2" y="3" width="19" height="22" fill="#a9cfe4" stroke="#cde4f0" />
    <circle cx="12" cy="14" r="8.500" fill="#ee7a1d" stroke="#f9d0a5" />
    <path d="M9 8.500v11l9-5.500z" fill="#fff" />
  </svg>
);

const OperaLogo = () => (
  <svg width="32" height="32" viewBox="0 0 32 32" aria-hidden="true">
    <path fillRule="evenodd" fill="#ee1f36" d="M16 1a15 15 0 1 0 0 30 15 15 0 1 0 0-30zM16 5c4.500 0 6.500 5 6.500 11s-2 11-6.500 11-6.500-5-6.500-11S11.500 5 16 5z" />
    <path d="M18 1.200c7.500 1 13 7.500 13 14.800s-5.500 13.800-13 14.800c3-2 4.500-8 4.500-14.800S21 3.200 18 1.200z" fill="#b30d22" />
  </svg>
);

const FeatherLogo = () => (
  <svg width="30" height="32" viewBox="0 0 30 32" aria-hidden="true">
    <rect x="1" y="4" width="26" height="26" rx="2" fill="#f8fafb" stroke="#c4d3dc" />
    <path d="M11 27c-1-6 1-10 6-13 1-6 5-11 11-13 1 8-1 15-6 20-4 3-7 3-11 6z" fill="#7d9430" />
    <path d="M11 27c-1-6 1-10 6-13-1 4 0 7 3 9-4 2-6 2-9 4z" fill="#d9661e" />
    <path d="M14 23l4-4 2 3-4 3z" fill="#2b5c9c" />
    <path d="M9 29L27 3" stroke="#3d4a26" />
  </svg>
);

const FolderLogo = () => (
  <svg width="34" height="32" viewBox="0 0 34 32" aria-hidden="true">
    <path d="M2 4l2-2h8l2 2h6l2 2h8l2 2v19H2z" fill="#f3dc90" stroke="#c9a64b" />
    <path d="M5 3h5v3H5z" fill="#36a637" /><path d="M13 5h5v3h-5z" fill="#d24a2c" /><path d="M22 7h5v3h-5z" fill="#3a8fd0" />
    <path d="M2 10h30v18H2z" fill="#f8e7ad" stroke="#d4b45d" />
    <path d="M6 31V22q0-3 3-3h16q3 0 3 3v9h-5v-6h-12v6z" fill="#8ccdf0" stroke="#e3f4fc" />
  </svg>
);

export default function App() {
  return (
    <>
      <Global />
      <Window>
        <TitleBar>
          <TitleText>
            <AppLogo s={16} />
            New Project - Proteus 8 Professional - Schematic Capture
          </TitleText>
          <WindowButtons>
            <WindowButton aria-label="Minimize">
              <svg width="12" height="12" aria-hidden="true"><rect x="1.500" y="5.500" width="9" height="3" fill="#fff" stroke="#4a5664" /></svg>
            </WindowButton>
            <WindowButton aria-label="Restore">
              <svg width="13" height="13" fill="none" aria-hidden="true">
                <path d="M4 2h7v7" stroke="#4a5664" strokeWidth="3.500" /><path d="M4 2h7v7" stroke="#fff" strokeWidth="1.500" />
                <path d="M3 5h5v5H3z" stroke="#4a5664" strokeWidth="4" /><path d="M3 5h5v5H3z" stroke="#fff" strokeWidth="2" />
              </svg>
            </WindowButton>
            <WindowButton aria-label="Close" $wide>
              <svg width="12" height="12" aria-hidden="true">
                <path d="M2 2l8 8M10 2l-8 8" stroke="#54404a" strokeWidth="4.500" /><path d="M2 2l8 8M10 2l-8 8" stroke="#fff" strokeWidth="2.800" />
              </svg>
            </WindowButton>
          </WindowButtons>
        </TitleBar>

        <MenuBar aria-label="Main menu">
          {menus.map((m) => <MenuButton key={m}>{m}</MenuButton>)}
        </MenuBar>

        <ToolbarRow>
          {toolbars.map((t, i) => (
            <Toolbar key={i} role="toolbar">
              <Grip />
              <Tools names={t.names} active={t.active} />
            </Toolbar>
          ))}
        </ToolbarRow>

        <TabStrip>
          <TabSlope viewBox="0 0 22 24" aria-hidden="true">
            <path d="M0 24L21 .5h1V24z" fill="#dfeef7" /><path d="M0 23.500L20 .5h2" fill="none" stroke="#6f9cb9" />
          </TabSlope>
          <Tab>
            <Ico s={15}>{schem}</Ico>
            Schematic Capture
            <svg width="14" height="14" aria-hidden="true"><path d="M2 2l10 10M12 2L2 12" stroke="#5c6166" strokeWidth="2" /></svg>
          </Tab>
          <TabRule />
        </TabStrip>

        <Workspace>
          <ToolRail>
            <RailGroup>
              <Grip $flat />
              <Tools names={railTools} active="Selection" flat />
            </RailGroup>
            <RailGroup>
              <Grip $flat />
              <Tool name="Rotate Clockwise" />
              <Tool name="Rotate Anticlockwise" />
              <AngleInput aria-label="Rotation angle" defaultValue="0°" />
              <Divider $flat />
              <Tool name="Flip Horizontal" />
              <Tool name="Flip Vertical" />
            </RailGroup>
          </ToolRail>

          <SidePanels>
            <Overview><OverviewMap /></Overview>
            <DevicePanel>
              <DeviceHeader>
                <LetterButton aria-label="Pick devices">P</LetterButton>
                <LetterButton aria-label="Library manager">L</LetterButton>
                <DeviceTitle>DEVICES</DeviceTitle>
              </DeviceHeader>
              <ul>
                {devices.map((d) => (
                  <li key={d}><DeviceItem $on={d === "DIODE"}>{d}</DeviceItem></li>
                ))}
              </ul>
            </DevicePanel>
          </SidePanels>

          <Sheet><Schematic /></Sheet>
        </Workspace>

        <StatusBar>
          <StatusPane $w={258}>
            <Grip />
            <SimControls>
              <SimButton aria-label="Play"><svg width="12" height="16" aria-hidden="true"><path d="M2 1l8 7-8 7z" fill="#12a512" stroke="#0a6f12" /></svg></SimButton>
              <SimButton aria-label="Step"><svg width="14" height="16" aria-hidden="true"><path d="M1.500 1v14" stroke="#1160c4" strokeWidth="2" /><path d="M4.500 1.500l8 6.500-8 6.500z" fill="#1d70d6" stroke="#0f4d9c" /></svg></SimButton>
              <SimButton aria-label="Pause"><svg width="12" height="16" aria-hidden="true"><path d="M3.500 1v14M8.500 1v14" stroke="#1160c4" strokeWidth="3" /></svg></SimButton>
              <SimButton aria-label="Stop"><svg width="14" height="14" aria-hidden="true"><rect x="1" y="1" width="12" height="12" fill="#1160c4" stroke="#0f4d9c" /></svg></SimButton>
            </SimControls>
            <Divider />
            <MessageButton>
              <svg width="15" height="15" aria-hidden="true">
                <circle cx="7.500" cy="7.500" r="6.500" fill="#1c9a1c" stroke="#0d5c14" /><path d="M7.500 3v2M7.500 6.500v5.500M6 7h1.500M6 12h3" stroke="#fff" strokeWidth="1.600" />
              </svg>
              2 Message(s)
            </MessageButton>
          </StatusPane>
          <StatusPane $w={412}>
            <Grip />
            <SimText>ANIMATING: 00:01:50.500000 (CPU load 2%)</SimText>
          </StatusPane>
          <StatusPane $grow={1}>
            <Grip />
            <Coords>
              <Coord $w={80}>-3200.0</Coord>
              <Coord $w={602}>-700.0</Coord>
              <Coord $w={26} $unit>th</Coord>
            </Coords>
          </StatusPane>
        </StatusBar>

        <Taskbar>
          <StartButton aria-label="Start"><StartLogo /></StartButton>
          <TaskButton aria-label="Media Player"><MediaLogo /></TaskButton>
          <TaskButton aria-label="Opera"><OperaLogo /></TaskButton>
          <TaskButton aria-label="Paint tool"><FeatherLogo /></TaskButton>
          <TaskButton aria-label="Explorer"><FolderLogo /></TaskButton>
          <TaskButton aria-label="Proteus" $on><AppLogo s={32} /></TaskButton>
          <Tray>
            <Language>IT</Language>
            <TrayButton aria-label="Show hidden icons"><svg width="8" height="5" aria-hidden="true"><path d="M0 5l4-4 4 4z" fill="#fff" /></svg></TrayButton>
            <TrayButton aria-label="Action Center">
              <svg width="17" height="17" aria-hidden="true"><path d="M2 2v14" stroke="#fff" strokeWidth="1.500" /><path d="M3 2c4-1 5 2 10 0v7c-4 2-6-1-10 0z" fill="#fff" /><circle cx="11.500" cy="12" r="4.500" fill="#d8251c" /><path d="M9.700 10.200l3.600 3.600M13.300 10.200l-3.600 3.600" stroke="#fff" strokeWidth="1.400" /></svg>
            </TrayButton>
            <TrayButton aria-label="Power">
              <svg width="16" height="17" fill="none" aria-hidden="true"><path d="M4 1.500h4M2.500 3.500h7v12h-7z" stroke="#fff" strokeWidth="1.800" /><path d="M7.500 6h7v3q0 3-3.500 3.500V16M9.500 6V3M12.500 6V3" stroke="#fff" strokeWidth="1.500" fill="#fff" /></svg>
            </TrayButton>
            <TrayButton aria-label="Network">
              <svg width="17" height="17" fill="none" aria-hidden="true"><path d="M5 4.500h10v8H5zM7 15.500h6" stroke="#dfe8f0" strokeWidth="1.500" /><path d="M1.500 1v4h3V1M3 5v9h3" stroke="#fff" /><path d="M8 8l7 7M15 8l-7 7" stroke="#d8251c" strokeWidth="2.200" /></svg>
            </TrayButton>
            <TrayButton aria-label="Volume">
              <svg width="17" height="15" fill="none" aria-hidden="true"><path d="M1 5h3l4-4v13l-4-4H1z" fill="#fff" /><path d="M10.500 5q1.500 2.500 0 5M12.500 3.500q3 4 0 8M14.500 2q4 5.500 0 11" stroke="#fff" /></svg>
            </TrayButton>
            <Clock>14:06<br />28/01/2023</Clock>
            <ShowDesktop aria-label="Show desktop" />
          </Tray>
        </Taskbar>
      </Window>
    </>
  );
}
